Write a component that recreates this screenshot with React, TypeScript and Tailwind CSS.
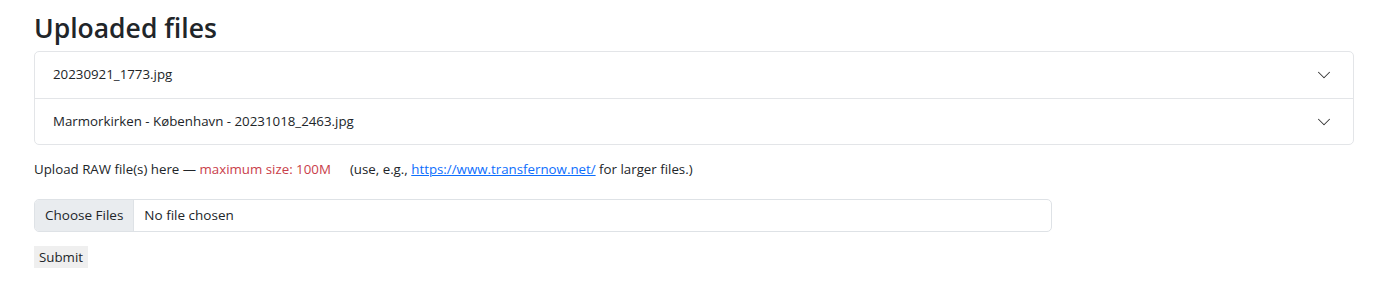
import { ChevronDown } from 'lucide-react';

const files = ['20230921_1773.jpg', 'Marmorkirken - København - 20231018_2463.jpg'];

export default function App() {
  return (
    <div className="min-h-[291px] bg-white text-[#212529] font-['Open_Sans',sans-serif]">
      <div className="pl-[34px] pr-[23px] pt-[10px]">
        <h3 className="text-[26.5px] leading-[36px] font-semibold mb-[5px]">Uploaded files</h3>

        <div className="border border-[#e3e5e8] rounded-[5px] bg-white">
          {files.map((name, i) => (
            <div
              key={name}
              className={`flex items-center justify-between h-[46px] pl-[18px] pr-[18px] text-[13.3px] ${
                i > 0 ? 'border-t border-[#e3e5e8]' : ''
              }`}
            >
              <span>{name}</span>
              <ChevronDown className="w-[22px] h-[22px] text-[#333]" strokeWidth={1.1} />
            </div>
          ))}
        </div>

        <p className="mt-[15px] text-[13.3px] leading-[18px]">
          Upload RAW file(s) here — <span className="text-[#c9404a]">maximum size: 100M</span>
          <span className="ml-[19px]">
            (use, e.g.,{' '}
            <a href="#" className="text-[#0d6efd] underline">
              https://www.transfernow.net/
            </a>{' '}
            for larger files.)
          </span>
        </p>

        <div className="mt-[21px] flex items-center w-[1018px] h-[33px] border border-[#dee2e6] rounded-[5px] overflow-hidden text-[13.5px]">
          <span className="h-full flex items-center px-[10px] bg-[#e9ecef] border-r border-[#dee2e6]">
            Choose Files
          </span>
          <span className="pl-[10px]">No file chosen</span>
        </div>

        <button className="mt-[14px] h-[22px] px-[5px] bg-[#efefef] text-[13.3px] leading-[22px] block">
          Submit
        </button>
      </div>
    </div>
  );
}
